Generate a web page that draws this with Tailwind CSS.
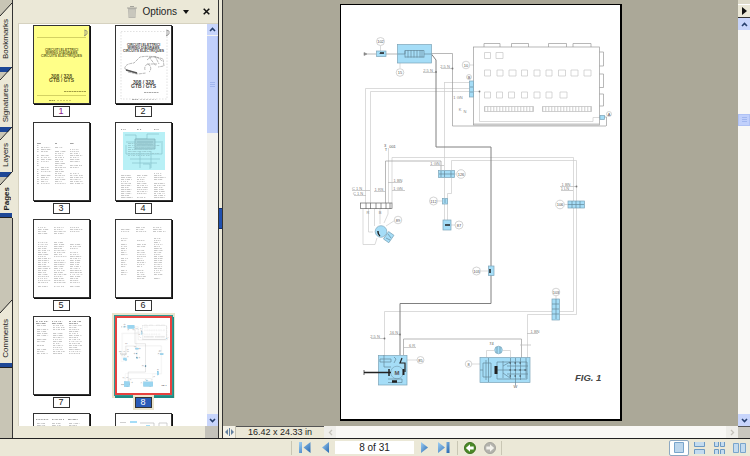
<!DOCTYPE html>
<html lang="en">
<head>
<meta charset="utf-8">
<title>Wiring diagrams</title>
<script src="https://cdn.jsdelivr.net/npm/@tailwindcss/browser@4"></script>
</head>
<body class="h-screen overflow-hidden flex flex-col bg-[#ebe8d7] font-['Liberation_Sans',Arial,sans-serif] text-[#222]">
<div class="flex flex-1 min-h-0 border-b border-[#222]">

  <!-- Navigation tabs -->
  <nav class="w-[13px] shrink-0 flex flex-col bg-[#c8c5b5] border-r border-[#333] text-[8px] leading-[12px]" aria-label="Panels">
    <button class="relative h-[67px] w-full flex items-center justify-center pt-3">
      <svg class="absolute inset-0" width="12" height="67"><path d="M12 3L0 16V67H12Z" fill="#ebe8d7"/><path d="M12 3L0 16" stroke="#222" fill="none"/></svg>
      <span class="relative [writing-mode:vertical-rl] rotate-180">Bookmarks</span>
    </button>
    <button class="relative h-[60px] w-full flex items-center justify-center pt-3">
      <svg class="absolute inset-0" width="12" height="60"><path d="M12 0L0 12V60H12Z" fill="#ebe8d7"/><path d="M0 0H12L8 5H0Z" fill="#1d4796"/><path d="M12 0L0 13" stroke="#222" fill="none"/></svg>
      <span class="relative [writing-mode:vertical-rl] rotate-180">Signatures</span>
    </button>
    <button class="relative h-[45px] w-full flex items-center justify-center pt-3">
      <svg class="absolute inset-0" width="12" height="45"><path d="M12 0L0 12V45H12Z" fill="#ebe8d7"/><path d="M0 0H12L8 5H0Z" fill="#1d4796"/><path d="M12 0L0 13" stroke="#222" fill="none"/></svg>
      <span class="relative [writing-mode:vertical-rl] rotate-180">Layers</span>
    </button>
    <button class="relative h-[46px] w-[13px] flex items-center justify-center pt-2" aria-pressed="true">
      <svg class="absolute inset-0" width="13" height="46"><path d="M12 0L0 12V46H13V0Z" fill="#ebe8d7"/><path d="M0 0H12L8 5H0Z" fill="#1d4796"/><path d="M12 0L0 13" stroke="#222" fill="none"/><path d="M0 41H12V45H0Z" fill="#1d4796"/><path d="M0 45.500H12" stroke="#222"/></svg>
      <span class="relative pr-px font-bold [writing-mode:vertical-rl] rotate-180">Pages</span>
    </button>
    <div class="h-[82px]"></div>
    <button class="relative h-[68px] w-full flex items-center justify-center pt-2">
      <svg class="absolute inset-0" width="12" height="68"><path d="M12 0L0 13V68H12Z" fill="#ebe8d7"/><path d="M12 0L0 13" stroke="#222" fill="none"/><path d="M0 63H12V67H0Z" fill="#1d4796"/><path d="M0 67.500H12" stroke="#222"/></svg>
      <span class="relative [writing-mode:vertical-rl] rotate-180">Comments</span>
    </button>
  </nav>

  <!-- Page thumbnails -->
  <aside class="w-[205px] shrink-0 flex flex-col">
    <header class="h-[23px] shrink-0 flex items-center justify-end pr-2">
      <svg class="mr-1.5" width="10" height="12" viewBox="0 0 10 12"><path d="M1 2H9L8.500 12H1.500Z" fill="#b9b8b0"/><path d="M0 2H10M3 .5H7" stroke="#a5a49c"/><path d="M3 3.500V11M5 3.500V11M7 3.500V11" stroke="#d8d6ca"/></svg>
      <button class="flex items-center text-[10px] leading-[14px]">Options
        <svg class="ml-1.5" width="6" height="4" viewBox="0 0 6 4"><path d="M0 0H6L3 4Z" fill="#111"/></svg></button>
      <button class="ml-3.5" aria-label="Close"><svg width="7" height="7" viewBox="0 0 7 7"><path d="M.7 .7L6.300 6.300M6.300 .7L.7 6.300" stroke="#111" stroke-width="1.500"/></svg></button>
    </header>
    <div class="flex flex-1 min-h-0 ml-[5px] border-l border-t border-[#d6d2c0] bg-white">
      <div class="flex-1 overflow-hidden pl-[13px] pt-[1px]">
        <ol id="thumbs" class="grid grid-cols-[58px_58px] gap-x-6 auto-rows-[97px] text-[9px]">
        </ol>
      </div>
      <div class="w-[11px] shrink-0 flex flex-col bg-[#f4f3ef]">
        <button class="h-[11px] bg-[#c8d5fb] grid place-items-center" aria-label="Scroll up"><svg width="7" height="5" viewBox="0 0 7 5"><path d="M1 4L3.500 1.500L6 4" fill="none" stroke="#27406e" stroke-width="1.600"/></svg></button>
        <div class="h-[97px] mt-px bg-[#c1d0fb] border-r border-[#a9bcf0] grid place-items-center"><svg width="5" height="6"><path d="M0 .5H5M0 2.500H5M0 4.500H5" stroke="#a2b7ef"/></svg></div>
        <button class="mt-auto h-[12px] bg-[#c8d5fb] grid place-items-center" aria-label="Scroll down"><svg width="7" height="5" viewBox="0 0 7 5"><path d="M1 1L3.500 3.500L6 1" fill="none" stroke="#27406e" stroke-width="1.600"/></svg></button>
      </div>
    </div>
    <div class="h-[12px] shrink-0 flex justify-end"><div class="w-[13px] bg-[#c4c2ba]"></div></div>
  </aside>

  <!-- Splitter -->
  <div class="w-[5px] shrink-0 border-x border-[#333] bg-[#ebe8d7] pt-[208px]"><div class="h-[21px] bg-[#1f50b0] border-y border-[#112f70]"></div></div>

  <!-- Document -->
  <main class="flex-1 min-w-0 flex flex-col">
    <div class="flex flex-1 min-h-0">
      <div class="flex-1 min-w-0 bg-[#aba898] flex justify-center pt-1 pb-[5px]">
        <div class="h-full aspect-[282/417] bg-white border border-r-2 border-b-2 border-black">
          <svg class="w-full h-full" viewBox="341 5 279 414" font-family="Liberation Sans, Arial, sans-serif">
            <g id="schematic" fill="none" stroke="#9a9a9a" stroke-width=".7">
              <!-- thin wires -->
              <g stroke="#cccccc">
                <path d="M365.500 203V88.500H470M370.500 203V91.500H479.500V121.500H593V117.500H600M444.500 82V198M444.500 82.500H470M451.500 170V160.500H576.500V314.500H527.500V358M392 203V157.500H573.500V311.500H384.500V355M388.500 148V203M451.500 178V193.500H447.500V220M444.500 204V220"/>
                <path d="M363 209V244.500H375L377 238M368.500 209V232H373M374.500 209V226M380 209V224M388 209V214L384 223M397 219L386 226"/>
                <path d="M486.500 357V350.500H494M503 350.500H510.500V357M456 174H454M438 201H442M455 225H451M564 204.500H568M556 296V299M481 271H488M407 360H417M472 364H480M380.500 46V51M400 63V68M470 65H474"/>
              </g>
              <path d="M364 54H376M386 54H397M431 53.500H452.500V126H606M385.500 203V161H441V170M403.500 355V339H521.500V358"/>
              <path d="M431 53.500L436 60V147H491V303.500H400V355" stroke="#808080" stroke-width="1"/>
              <path d="M364 52.500L367 54L364 55.500Z" fill="#777"/>
              <!-- control unit -->
              <rect x="473.500" y="47" width="126" height="78"/>
              <path d="M473 124H599" stroke="#aaa"/>
              <path d="M484 47V43.500H500V47M511.500 47V43.500H528.500V47M548.500 47V43.500H566.500V47M573 47V43.500H591V47M599.500 52H603.500V66H599.500M599.500 74H603.500V87.500H599.500M599.500 94H603.500V106H599.500M599.500 117H606.500V126"/>
              <path stroke="#c6c6c6" d="M484.500 52.500h6v6h-6zM496 52.500h7v6h-7zM484.500 70h6v6h-6zM497 70h6v6h-6zM509 70h7v6h-7zM521.500 70h6v6h-6zM534 70h6v6h-6zM546 70h6v6h-6zM558.500 70h7v6h-7zM571 70h7v6h-7zM584 70h7v6h-7zM484.500 92h6v6h-6zM496.500 92h6v6h-6zM508.500 92h6v6h-6zM521.500 92h6v6h-6zM534 92h6v6h-6zM546 92h6v6h-6zM560 92h7v6h-7z"/>
              <path stroke="#b8b8b8" stroke-width="5" stroke-dasharray=".7 2.300" d="M484.500 109H534M542.500 109H592"/>
              <path stroke="#bbb" d="M484.500 106.500h49v5h-49zM542.500 106.500h49v5h-49z"/>
              <!-- highlighted components -->
              <g fill="#a5ddf7" stroke="#7ba3b7">
                <rect x="376.500" y="51" width="9.500" height="5.500"/><rect x="397.500" y="44.500" width="34" height="18.500"/>
                <rect x="469.500" y="81" width="4" height="16"/><rect x="600" y="115.500" width="4.500" height="4"/>
                <rect x="438.500" y="170.500" width="16" height="7"/><rect x="442.500" y="198.500" width="5" height="5.500"/>
                <rect x="443" y="220" width="8" height="10"/><circle cx="381" cy="231.500" r="5.800"/>
                <rect x="385.500" y="232.500" width="6.500" height="9" transform="rotate(35 388.500 237)"/>
                <rect x="568" y="201" width="16.500" height="7"/><rect x="488.500" y="266" width="5.500" height="9.500"/>
                <rect x="552" y="299" width="7.500" height="21"/><rect x="378.500" y="355.500" width="28.500" height="29.500"/>
                <rect x="480" y="357.500" width="50" height="25"/><circle cx="498.500" cy="350" r="3.800"/>
                <circle cx="397" cy="372.500" r="6.300"/>
              </g>
              <g stroke="#64889a">
                <path d="M379 53.500H384M397.500 54H405V50.500V57.500M424 50.500V57.500M424 54H431M408 50V57.500M411 50V57.500M414 50V57.500M417 50V57.500M420 50V57.500M422 50V57.500M405 50.500H424M405 57H424M441 171V177M444.500 171V177M451 171V177M439 174H454M445 199V203M572 201V208M576 201V208M580 201V208M568 204.500H584M552 304H559M552 309H559M552 314H559M556 299V319M470 87H473M470 92H473M497 347V353M500 347V353M388 234L391 238M386 238L390 240"/>
                <path d="M380 359H391V362H380ZM384 355V367H391M394 357L396 359L394 363M388 379H402V382.500H388"/>
                <path d="M483 363H491V377H483ZM486 360V380M488.500 358V382M497 362H527V379H497ZM497 370H527M503 366L510 362M503 373L510 378M510.500 358V379M515.500 358V385M520.500 358V380M526 358V378M503 361V378M480 370H483M507 366H528M507 374H528"/>
              </g>
              <g stroke="#222"><path d="M378 231A4 5 0 0 0 380 236M445 225H450M490 269V273M380 53H384" stroke-width="1.500"/><path d="M364 372.500H391M389 369V376" stroke-width="1.500"/><path d="M402 358L400 363H405V372" stroke-width="1.200"/><path d="M392 381.500H397" stroke-width="2.500"/><path d="M403.500 369V375" stroke-width="2"/><path d="M496 366V374" stroke-width="3"/><path stroke-width="1.200" stroke-dasharray="1.200 3.800" d="M509.500 363H523M509.500 370H528M509.500 376H523"/><path d="M364 370V375" stroke-width=".7"/></g>
              <rect x="360.500" y="203" width="31.500" height="5.500" stroke="#666" fill="#fff"/>
              <path stroke="#666" d="M366 203V209M370.500 203V209M376 203V209M381 203V209M386 203V209M390 203V209"/>
              <!-- callout bubbles -->
              <g stroke="#c2c2c2" fill="#fff"><circle cx="380.500" cy="41.500" r="4"/><circle cx="400" cy="72.500" r="3.800"/><circle cx="466" cy="65" r="3.800"/><circle cx="461" cy="174" r="4.300"/><circle cx="433.500" cy="201" r="4"/><circle cx="459" cy="225" r="4"/><circle cx="398" cy="220" r="3.800"/><circle cx="560" cy="204.500" r="4.300"/><circle cx="556" cy="292" r="3.800"/><circle cx="476.500" cy="271" r="4"/><circle cx="420.500" cy="360" r="3.500"/><circle cx="468.500" cy="364" r="3.300"/><circle cx="609" cy="114" r="2.500"/><circle cx="469" cy="77" r="2.500"/></g>
              <g fill="#555" stroke="none" font-size="4" text-anchor="middle">
                <text x="380.500" y="43">102</text><text x="400" y="74">15</text><text x="466" y="66.500">10</text><text x="461" y="175.500">126</text><text x="433.500" y="202.500">112</text><text x="459" y="226.500">87</text><text x="398" y="221.500">89</text><text x="560" y="206">106</text><text x="556" y="293.500">103</text><text x="476.500" y="272.500">103</text><text x="420.500" y="361.500">85</text><text x="468.500" y="365.500">8</text><text x="491.500" y="345">74</text><text x="392.500" y="148">001</text><text x="385" y="147">3</text><text x="386" y="151">T</text><text x="609" y="115.500">A</text><text x="469" y="78.500">B</text><text x="515.500" y="388">W</text>
                <text x="397" y="374.500" font-size="6" font-weight="bold">M</text>
              </g>
              <g fill="#858585" stroke="none" font-size="4" text-anchor="middle">
                <text x="428" y="72">2,5 N</text><text x="445" y="68">2,5 N</text><text x="458" y="99">1 GN</text><text x="460" y="111">K</text><text x="465" y="113">N</text><text x="357" y="190">C 1 N</text><text x="358" y="195">C 1 N</text><text x="379" y="191">1 RS</text><text x="398" y="182">1 BN</text><text x="398" y="190">1 GN</text><text x="435" y="165">1 GN</text><text x="566" y="186">1 BN</text><text x="565" y="190">1 LN</text><text x="375" y="338">2,5 N</text><text x="394" y="334">16 N</text><text x="412" y="347">6 R</text><text x="535" y="333">1 BN</text><text x="368" y="214">R</text><text x="380" y="214">B</text>
              </g>
              <path stroke="#b8b8b8" d="M423 72.500H436M441 68.500H452M352 190.500H370M354 195.500H366M374 191.500H386M388 182.500H402M392 190.500H405M430 165.500H444M560 186.500H577M561 190.500H573M371 338.500H384M389 334.500H400M403 347.500H416M527 333.500H538M520 345H531"/>
              <g fill="#777" stroke="none"><circle cx="436" cy="72" r=".9"/><circle cx="452.500" cy="68.500" r=".9"/><circle cx="384.500" cy="338.500" r=".9"/><circle cx="400" cy="334.500" r=".9"/><circle cx="576.500" cy="186.500" r=".9"/><circle cx="479.500" cy="91.500" r=".9"/></g>
              <text x="575" y="380.500" font-size="9.500" font-weight="bold" font-style="italic" fill="#444" stroke="none">FIG. 1</text>
            </g>
          </svg>
        </div>
      </div>
      <div class="w-[12px] shrink-0 flex flex-col bg-[#f9f8f6]">
        <div class="h-1 bg-[#dedbca]"></div>
        <button class="h-[14px] bg-[#ebe8d7] border-b border-[#333] border-t border-t-white grid place-items-center" aria-label="Document menu"><svg width="5" height="8"><path d="M0 0V8L5 4Z" fill="#111"/></svg></button>
        <button class="h-[12px] bg-[#c8d5fb] grid place-items-center" aria-label="Scroll up"><svg width="7" height="5" viewBox="0 0 7 5"><path d="M1 4L3.500 1.500L6 4" fill="none" stroke="#27406e" stroke-width="1.600"/></svg></button>
        <div class="mt-[84px] h-[12px] bg-[#c1d0fb] border border-[#b0c2f5] grid place-items-center"><svg width="5" height="6"><path d="M0 .5H5M0 2.500H5M0 4.500H5" stroke="#a2b7ef"/></svg></div>
        <button class="mt-auto h-[12px] bg-[#c8d5fb] grid place-items-center" aria-label="Scroll down"><svg width="7" height="5" viewBox="0 0 7 5"><path d="M1 1L3.500 3.500L6 1" fill="none" stroke="#27406e" stroke-width="1.600"/></svg></button>
      </div>
    </div>
    <div class="h-[12px] shrink-0 flex">
      <button class="w-[13px] bg-[#f3f1e6] border-r border-[#c5c2b2] grid place-items-center" aria-label="Resize pane"><svg width="9" height="8" viewBox="0 0 9 8"><path d="M0 4L3 1V7ZM9 4L6 1V7Z" fill="#64819f"/><path d="M4.500 0V8" stroke="#64819f"/></svg></button>
      <div class="w-[88px] border-t border-[#555] text-center text-[9px] leading-[11px] whitespace-nowrap">16.42 x 24.33 in</div>
      <div class="flex-1 flex justify-between bg-[#f9f8f5]">
        <button class="w-[12px] bg-[#efeeea] grid place-items-center" aria-label="Scroll left"><svg width="5" height="7"><path d="M4 1L1.500 3.500L4 6" fill="none" stroke="#c5c3bb" stroke-width="1.300"/></svg></button>
        <button class="w-[12px] bg-[#efeeea] grid place-items-center" aria-label="Scroll right"><svg width="5" height="7"><path d="M1 1L3.500 3.500L1 6" fill="none" stroke="#c5c3bb" stroke-width="1.300"/></svg></button>
      </div>
      <div class="w-[12px] bg-[#c9c7be] border-t border-[#555]"></div>
    </div>
  </main>
</div>

<!-- Page toolbar -->
<footer class="h-[17px] shrink-0 flex items-center pl-[291px] pr-1">
  <svg width="0" height="0" class="absolute"><defs><linearGradient id="blue" x1="0" y1="0" x2="1" y2="1"><stop offset="0" stop-color="#9fd0f5"/><stop offset="1" stop-color="#2767b0"/></linearGradient></defs></svg>
  <div class="w-px h-[14px] bg-[#c9c6b4]"></div>
  <button class="ml-[7px]" aria-label="First page"><svg width="12" height="11"><path d="M0 0H3V11H0ZM11.500 0V11L4.500 5.500Z" fill="url(#blue)"/></svg></button>
  <button class="ml-[11px]" aria-label="Previous page"><svg width="7" height="11"><path d="M7 0V11L0 5.500Z" fill="url(#blue)"/></svg></button>
  <input class="ml-[6px] w-[79px] h-[13px] bg-white text-center text-[10px] leading-[13px]" value="8 of 31" aria-label="Page">
  <button class="ml-[7px]" aria-label="Next page"><svg width="7" height="11"><path d="M0 0V11L7 5.500Z" fill="url(#blue)"/></svg></button>
  <button class="ml-[10px]" aria-label="Last page"><svg width="12" height="11"><path d="M8.500 0H11.500V11H8.500ZM0 0V11L7 5.500Z" fill="url(#blue)"/></svg></button>
  <div class="ml-[7px] w-px h-[14px] bg-[#c9c6b4]"></div>
  <button class="ml-[6px]" aria-label="Previous view"><svg width="12" height="12" viewBox="0 0 13 13"><circle cx="6.500" cy="6.500" r="6" fill="#4c8a28" stroke="#3a6d1d"/><path d="M2 6.500L6.500 2.500V5H10.500V8H6.500V10.500Z" fill="#fff"/></svg></button>
  <button class="ml-[8px]" aria-label="Next view"><svg width="12" height="12" viewBox="0 0 13 13"><circle cx="6.500" cy="6.500" r="6" fill="#b4b3ad" stroke="#a3a29b"/><path d="M11 6.500L6.500 2.500V5H2.500V8H6.500V10.500Z" fill="#f3f2ec"/></svg></button>
  <div class="ml-[5px] w-px h-[14px] bg-[#c9c6b4]"></div>
  <div class="ml-auto flex items-center gap-2">
    <button class="-mr-1 w-[20px] h-[16px] border border-[#8ea9c2] rounded-[2px] bg-white grid place-items-center" aria-label="Single page"><svg width="10" height="11"><path d="M.5 .5H9.500V10.500H.5Z" fill="#bcd6ec" stroke="#79a5cc"/></svg></button>
    <button class="w-[12px] grid place-items-center" aria-label="Continuous"><svg width="11" height="12"><path d="M.5 0V4.500H10.500V0M.5 12V7.500H10.500V12" fill="#c3dbef" stroke="#6c99c3"/></svg></button>
    <button class="w-[12px] grid place-items-center" aria-label="Continuous facing"><svg width="11" height="12"><path d="M.5 0V4.500H4.500V0M6.500 0V4.500H10.500V0M.5 12V7.500H4.500V12M6.500 12V7.500H10.500V12" fill="#c3dbef" stroke="#6c99c3"/></svg></button>
    <button class="w-[13px] grid place-items-center" aria-label="Facing"><svg width="13" height="10"><path d="M.5 .5H5.500V9.500H.5ZM7.500 .5H12.500V9.500H7.500Z" fill="#c3dbef" stroke="#79a5cc"/></svg></button>
  </div>
</footer>

<script>
// Greeked text for the thumbnails: [x, width, firstRow, lastRow, colour]
let seed = 7;
const rnd = () => (seed = (seed * 16807) % 2147483647) / 2147483647;
function greek(blocks) {
  let s = '';
  for (const [x, w, y0, y1, c] of blocks)
    for (let y = y0; y <= y1; y += 2)
      if (rnd() > .1) s += `<path d="M${x} ${y}.5h${(w * (.6 + rnd() * .4)).toFixed(1)}" stroke="${c}" stroke-dasharray="${(1 + rnd() * 3).toFixed(1)} ${(.5 + rnd()).toFixed(1)} 1 .6"/>`;
  return s;
}
const G = '#c8c8c8', D = '#a5a5a5';
const title = (y, c) => `<g font-weight="bold" text-anchor="middle" fill="${c}"><g font-size="3.400"><text x="27.500" y="${y}">CIRCUITI ELETTRICI</text><text x="27.500" y="${y + 3}">WIRING DIAGRAMS</text><text x="27.500" y="${y + 6}">CIRCUITS ELECTRIQUES</text></g></g>`;
const model = (y, c) => `<g font-weight="bold" font-size="5" text-anchor="middle" fill="${c}"><text x="27.500" y="${y}">308 / 328</text><text x="27.500" y="${y + 4}">GTB / GTS</text></g>`;
const badge = '<path d="M50.500 4L53 5V8L50 10M51 4V10" fill="none" stroke="#777" stroke-width=".7"/>';
const art = [
  badge + '<path d="M3 11.500H52M3 69.500H52" stroke="#b5b24a" stroke-width=".6"/>' + title(25, '#66631d') + model(52, '#57541a') + '<path d="M30 65.500H52M15 74.500H21" stroke="#a19d45" stroke-dasharray="2 .5"/><path d="M23 74.500H38" stroke="#cfcc62" stroke-dasharray="2 1"/>',
  badge + '<path d="M5 5.500H51V73H5Z" fill="none" stroke="#ccc" stroke-width=".6" stroke-dasharray="1.500 1.500"/>' + title(20, '#444') + '<path d="M9 43Q8 38 18 37L24 31Q36 29 47 33L48 40L42 41M9 43L22 48L30 47M12 46L21 48M29 44A3 4 0 1 1 33 46M31 34Q38 27 46 35M31 38H41M33 31L40 40M39 30L43 38" fill="none" stroke="#8a8a8a" stroke-width=".6" stroke-dasharray="3 .7"/><path d="M10 44L21 47" stroke="#555" stroke-width="1.300"/>' + model(58, '#444') + '<path d="M28 66.500H43M16 73.500H22" stroke="#aaa" stroke-dasharray="2 .5"/><path d="M24 73.500H40" stroke="#ccc" stroke-dasharray="2 1"/>',
  greek([[3, 2, 20, 60, G], [7, 11, 24, 60, G], [21, 11, 24, 60, G], [36, 14, 24, 60, G], [3, 6, 20, 20, D], [21, 4, 20, 20, D], [36, 4, 20, 20, D]]),
  '<path d="M7 9H49V47H7Z" fill="#b8f0f6"/><path d="M9 12H20V16H31V11H43M10 19H47M10 22V31H46V20M14 36H44M16 40H41M24 28V45M35 28V45M27 41H34V46" stroke="#7fbcc6" stroke-width=".6" fill="none"/><path d="M19 16H39V26H19ZM21 19H37M21 22H37" fill="#a4d6dd" stroke="#7fb0b8" stroke-width=".7"/>' + greek([[12, 34, 20, 34, '#9ccdd3'], [5, 6, 6, 6, D], [21, 7, 6, 6, D], [38, 7, 6, 6, D], [5, 12, 50, 74, G], [21, 12, 50, 74, G], [38, 12, 50, 74, G]]),
  greek([[4, 12, 7, 14, G], [20, 12, 7, 14, G], [36, 13, 7, 14, G], [4, 13, 22, 66, G], [20, 13, 22, 66, G], [36, 13, 22, 66, G]]),
  greek([[5, 11, 7, 12, G], [20, 13, 7, 12, G], [37, 14, 7, 12, G], [5, 7, 18, 58, G], [21, 9, 18, 58, G], [38, 9, 18, 58, G]]),
  greek([[2, 15, 4, 6, D], [18, 15, 4, 6, D], [35, 15, 4, 6, D], [3, 12, 8, 36, G], [19, 12, 8, 36, G], [35, 13, 8, 36, G]]),
  '<svg x="0" y="0" width="53" height="75" viewBox="341 5 279 414" preserveAspectRatio="none"><use href="#schematic"/><g fill="#9ad5f0"><path d="M397 44H432V63H397ZM378 355H407V385H378ZM480 357H530V383H480ZM552 299H560V320H552ZM568 201H585V208H568ZM438 170H455V178H438ZM374 224H392V238H374Z"/></g></svg>',
  greek([[2, 15, 5, 6, D], [18, 15, 5, 6, D], [34, 16, 5, 6, D], [3, 12, 9, 25, G], [18, 12, 9, 25, G], [35, 12, 9, 25, G]]),
  '<path d="M4 8.500H10M24 9H38V20M43 13V9H51V14M8 16H22" fill="none" stroke="#bbb" stroke-width=".7"/><path d="M14 7H21V9H14ZM30 11H34V15H30Z" fill="#a5ddf7"/>'
];
document.getElementById('thumbs').innerHTML = art.map((a, i) => {
  const on = i === 7;
  const page = on ? 'border-2 border-[#e8413f] shadow-[0_0_0_1px_#2f9a94,1px_2px_0_1px_#218a84,0_0_0_3px_#ebe5cf]'
    : 'border border-[#333] shadow-[1px_1px_0_#111] ' + (i === 0 ? 'bg-[#ffff88]' : 'bg-white');
  const label = on ? 'bg-[#2a5bb8] text-white shadow-[0_0_0_2px_#ebe5cf]' : 'bg-white ' + (i === 0 ? 'text-[#8a208a]' : '');
  // The last row is scrolled so that only the tops of its pages show
  const tag = i < 8 ? `<span class="w-[17px] h-[11px] border border-[#333] text-center leading-[9px] ${label}">${i + 1}</span>` : '';
  return `<li><a href="#page-${i + 1}" aria-label="Page ${i + 1}" class="flex flex-col items-center gap-[2px]"><span class="block w-[57px] h-[79px] overflow-hidden ${page}"><svg class="w-full h-full" viewBox="0 0 ${on ? '53 75' : '55 77'}" font-family="Liberation Sans, Arial, sans-serif">${a}</svg></span>${tag}</a></li>`;
}).join('');
</script>
</body>
</html>
